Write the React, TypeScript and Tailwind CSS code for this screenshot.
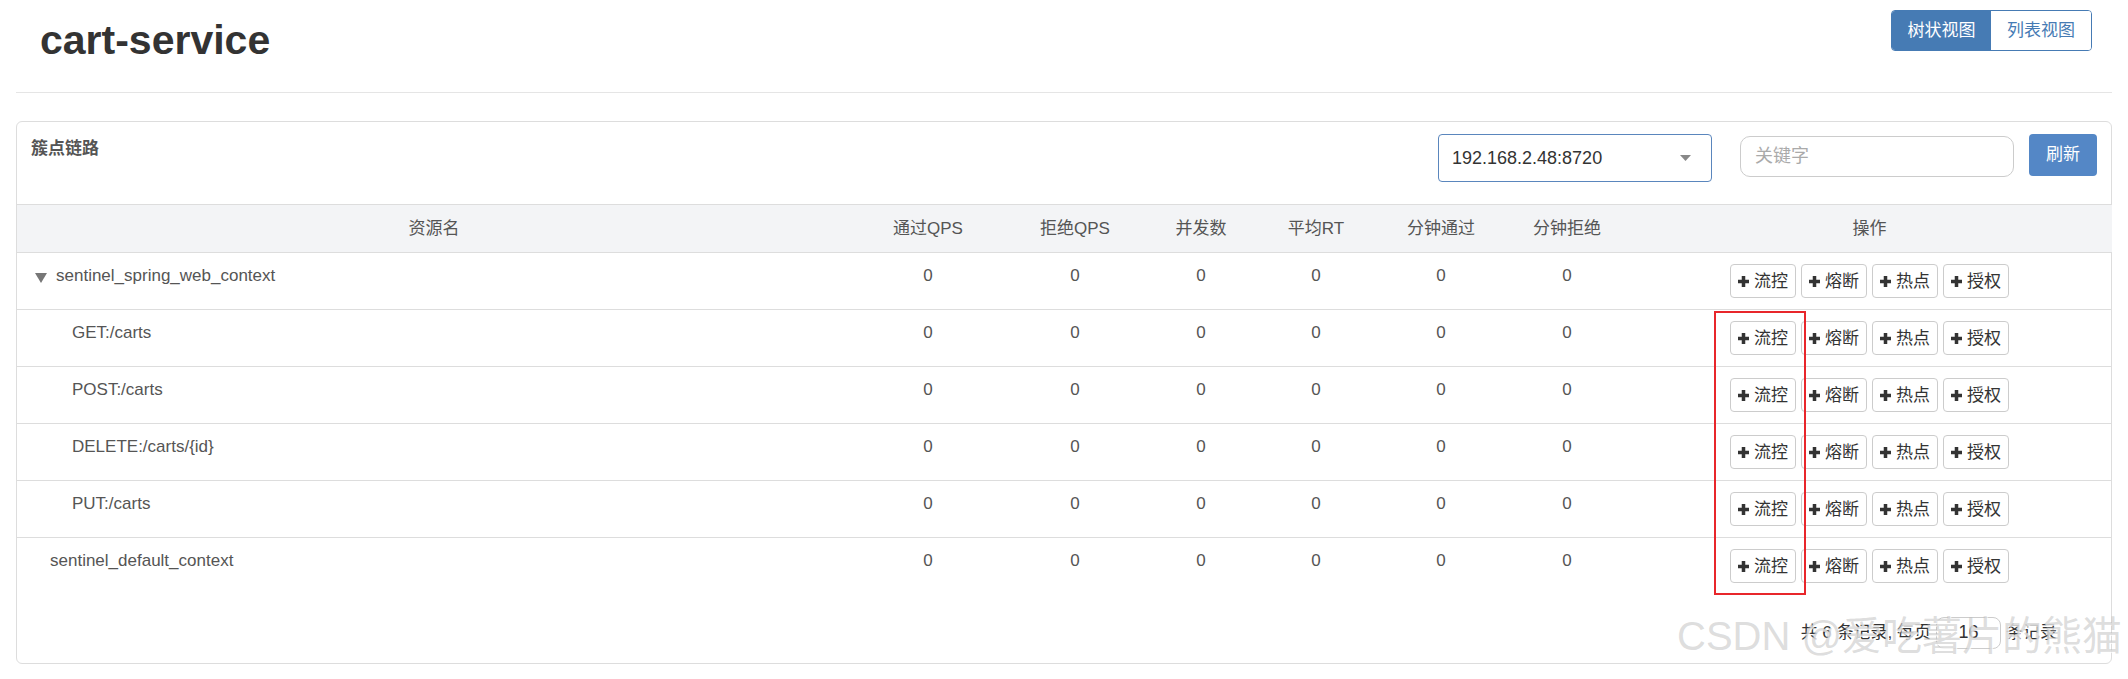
import React from 'react';

const rows = [
  { name: 'sentinel_spring_web_context', kind: 'root' },
  { name: 'GET:/carts', kind: 'child' },
  { name: 'POST:/carts', kind: 'child' },
  { name: 'DELETE:/carts/{id}', kind: 'child' },
  { name: 'PUT:/carts', kind: 'child' },
  { name: 'sentinel_default_context', kind: 'leaf' },
];

const actions = ['流控', '熔断', '热点', '授权'];

function PlusIcon() {
  return (
    <svg width="11" height="11" viewBox="0 0 10 10" className="shrink-0">
      <path d="M3.4 0h3.2v3.4H10v3.2H6.6V10H3.4V6.6H0V3.4h3.4z" fill="#333" />
    </svg>
  );
}

function ActionButton({ label }: { label: string }) {
  return (
    <button className="flex items-center gap-[5px] h-[34px] px-[7px] border border-[#ccc] rounded-[4px] bg-white text-[17px] text-[#333] leading-none whitespace-nowrap">
      <PlusIcon />
      <span>{label}</span>
    </button>
  );
}

export default function App() {
  return (
    <div className="relative w-[2128px] h-[679px] overflow-hidden bg-white px-[16px] font-['Liberation_Sans','Noto_Sans_CJK_SC',sans-serif] text-[#555]">
      {/* page header */}
      <div className="flex justify-between items-start h-[93px] border-b border-[#e5e5e5] pl-[24px] pr-[20px] pt-[10px]">
        <h1 className="mt-[6px] text-[41px] leading-[48px] font-bold text-[#333]">cart-service</h1>
        <div className="flex h-[41px] rounded-[4px] border border-[#467bb4] overflow-hidden text-[17px]">
          <button className="w-[99px] bg-[#467bb4] text-white">树状视图</button>
          <button className="w-[100px] bg-white text-[#467bb4]">列表视图</button>
        </div>
      </div>

      {/* panel */}
      <div className="mt-[28px] border border-[#ddd] rounded-[6px]">
        <div className="flex items-start justify-between h-[82px] px-[14px] pt-[12px]">
          <div className="mt-[3px] text-[17px] leading-[24px] font-bold text-[#555]">簇点链路</div>
          <div className="flex items-start">
            <div className="flex items-center justify-between w-[274px] h-[48px] border border-[#5a86bd] rounded-[4px] pl-[13px] pr-[20px] text-[18px] text-[#333]">
              <span>192.168.2.48:8720</span>
              <svg width="11" height="6" viewBox="0 0 11 6">
                <polygon points="0,0 11,0 5.5,6" fill="#888" />
              </svg>
            </div>
            <div className="ml-[28px] mt-[2px] flex items-center w-[274px] h-[41px] border border-[#ccc] rounded-[10px] pl-[14px] text-[18px] text-[#aaa]">
              关键字
            </div>
            <button className="ml-[15px] w-[68px] h-[42px] rounded-[4px] bg-[#5487c6] text-white text-[17px]">刷新</button>
          </div>
        </div>

        <table className="w-full table-fixed border-collapse text-[17px] text-[#555]">
          <colgroup>
            <col className="w-[834px]" />
            <col className="w-[154px]" />
            <col className="w-[140px]" />
            <col className="w-[112px]" />
            <col className="w-[118px]" />
            <col className="w-[132px]" />
            <col className="w-[120px]" />
            <col className="w-[485px]" />
          </colgroup>
          <thead>
            <tr className="bg-[#f3f4f6]">
              {['资源名', '通过QPS', '拒绝QPS', '并发数', '平均RT', '分钟通过', '分钟拒绝', '操作'].map((h) => (
                <th key={h} className="h-[48px] border-y border-[#ddd] font-normal text-center align-middle">
                  {h}
                </th>
              ))}
            </tr>
          </thead>
          <tbody>
            {rows.map((r) => (
              <tr key={r.name}>
                <td className="border-t border-[#ddd] align-top pt-[11px] leading-[24px]">
                  {r.kind === 'root' && (
                    <div className="flex items-center pl-[18px]">
                      <svg width="12" height="10" viewBox="0 0 12 10" className="mt-[4px]">
                        <polygon points="0,0 12,0 6,10" fill="#777" />
                      </svg>
                      <span className="ml-[9px]">{r.name}</span>
                    </div>
                  )}
                  {r.kind === 'child' && <div className="pl-[55px]">{r.name}</div>}
                  {r.kind === 'leaf' && <div className="pl-[33px]">{r.name}</div>}
                </td>
                {[0, 1, 2, 3, 4, 5].map((i) => (
                  <td key={i} className="border-t border-[#ddd] align-top pt-[11px] text-center leading-[24px]">
                    0
                  </td>
                ))}
                <td className="border-t border-[#ddd] py-[11px]">
                  <div className="flex justify-center gap-[5px]">
                    {actions.map((a) => (
                      <ActionButton key={a} label={a} />
                    ))}
                  </div>
                </td>
              </tr>
            ))}
          </tbody>
        </table>

        <div className="flex justify-end items-center h-[69px] pt-[8px] pr-[54px] text-[17px] text-[#333]">
          <span>共 6 条记录, 每页</span>
          <div className="mx-[5px] flex items-center justify-center w-[65px] h-[32px] border border-[#ccc] rounded-[8px] text-[18px]">
            16
          </div>
          <span>条记录</span>
        </div>
      </div>

      {/* annotation */}
      <div className="absolute left-[1714px] top-[311px] w-[92px] h-[284px] border-2 border-[#e8262b]" />

      {/* watermark */}
      <div className="absolute left-[1677px] top-[608px] whitespace-nowrap text-[40px] leading-[56px] text-[rgba(180,180,180,0.45)] [text-shadow:1px_1px_0_rgba(255,255,255,0.8)] pointer-events-none">
        CSDN @爱吃薯片的熊猫
      </div>
    </div>
  );
}
